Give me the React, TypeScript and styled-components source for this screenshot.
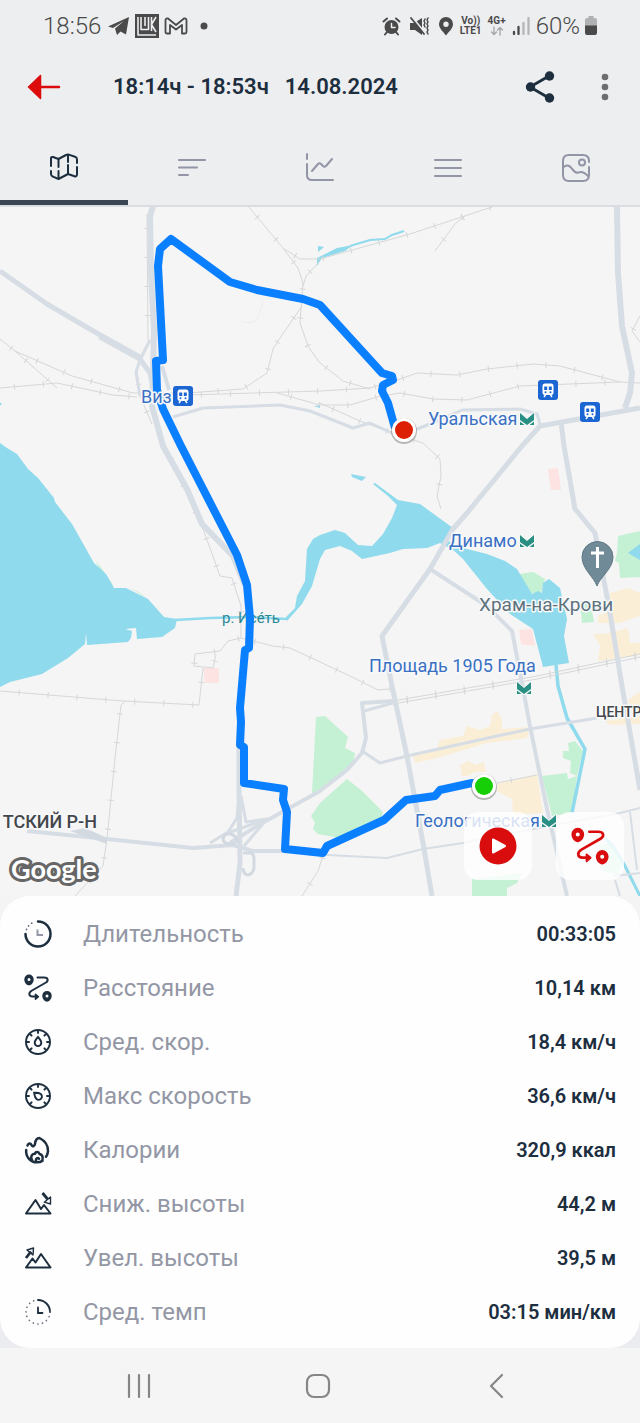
import React, { useState } from 'react';
import styled, { createGlobalStyle } from 'styled-components';

const GlobalStyle = createGlobalStyle`
  * {
    box-sizing: border-box;
  }
  body {
    margin: 0;
    background: #edeef0;
    font-family: Roboto, "Noto Sans", sans-serif;
  }
`;

const Page = styled.div`
  display: flex;
  flex-direction: column;
  min-height: 100vh;
  color: #1d2e3f;
`;

const StatusBar = styled.div`
  display: flex;
  align-items: center;
  justify-content: space-between;
  height: 52px;
  padding: 0 42px 0 43px;
  color: #4a4a4a;
`;

const StatusGroup = styled.div<{ $gap: number }>`
  display: flex;
  align-items: center;
  gap: ${({ $gap }) => $gap}px;
`;

const StatusText = styled.span`
  font-size: 24px;
  line-height: 30px;
  font-weight: 300;
`;

const Network = styled.span`
  display: flex;
  flex-direction: column;
  align-items: center;
  font-size: 10px;
  line-height: 10px;
  font-weight: 700;
`;

const Header = styled.header`
  display: flex;
  align-items: center;
  height: 70px;
  padding: 0 15px 0 24px;
`;

const IconButton = styled.button`
  display: flex;
  align-items: center;
  justify-content: center;
  width: 40px;
  height: 40px;
  padding: 0;
  border: 0;
  background: none;
  cursor: pointer;
`;

const Title = styled.h1`
  display: flex;
  flex: 1;
  gap: 16px;
  margin: 0 0 0 49px;
  font-size: 22px;
  line-height: 28px;
  font-weight: 600;
`;

const HeaderActions = styled.div`
  display: flex;
  gap: 25px;
`;

const Tabs = styled.div`
  display: flex;
  padding-top: 8px;
  border-bottom: 2px solid #d9dce0;
`;

const Tab = styled.button<{ $active: boolean }>`
  display: flex;
  flex: 1;
  align-items: center;
  justify-content: center;
  height: 75px;
  padding: 5px 0 0;
  border: 0;
  border-bottom: 5px solid ${({ $active }) => ($active ? '#3a4652' : 'transparent')};
  background: none;
  color: ${({ $active }) => ($active ? '#1d2e3f' : '#9195a6')};
  cursor: pointer;
`;

const MapArea = styled.main`
  position: relative;
  overflow: hidden;
  background: #f5f5f5;
`;

const MapCanvas = styled.svg`
  display: block;
  width: 100%;
  height: auto;
`;

const MapActions = styled.div`
  position: absolute;
  right: 16px;
  bottom: 16px;
  display: flex;
  gap: 24px;
`;

const MapButton = styled.button`
  display: flex;
  align-items: center;
  justify-content: center;
  width: 68px;
  height: 68px;
  padding: 0;
  border: 0;
  border-radius: 14px;
  background: rgba(255, 255, 255, 0.8);
  color: #d90d0d;
  cursor: pointer;
`;

const StatsArea = styled.section`
  background: linear-gradient(#f4f4f5 50%, #ebecf0 50%);
`;

const Stats = styled.dl`
  margin: 0;
  padding: 11px 24px 9px;
  border-radius: 30px;
  background: #fefefe;
`;

const StatRow = styled.div`
  display: flex;
  align-items: center;
  height: 54px;
`;

const StatName = styled.dt`
  display: flex;
  flex: 1;
  align-items: center;
  gap: 31px;
  color: #9397a5;
  font-size: 24px;
  line-height: 30px;
`;

const StatIcon = styled.svg`
  width: 28px;
  height: 28px;
  color: #1d2e3f;
`;

const StatValue = styled.dd`
  margin: 0;
  font-size: 20px;
  line-height: 30px;
  font-weight: 600;
`;

const SystemNav = styled.nav`
  display: grid;
  flex: 1;
  grid-template-columns: repeat(3, 1fr);
  place-items: center;
  min-height: 75px;
  padding: 0 54px 0 50px;
  background: #f5f5f5;
  color: #868686;
`;

const Icon = styled.svg`
  flex: none;
  fill: none;
  stroke: currentColor;
  stroke-linecap: round;
  stroke-linejoin: round;
`;

const MapLabel = styled.text<{ $size?: number; $plain?: boolean }>`
  font-size: ${({ $size }) => $size ?? 18}px;
  paint-order: stroke;
  stroke: ${({ $plain }) => ($plain ? 'none' : '#f8f9fa')};
  stroke-width: 3px;
  stroke-linejoin: round;
`;

const RouteGlyph: React.FC = () => (
  <g stroke="currentColor" fill="none" strokeLinecap="round" strokeLinejoin="round">
    <path d="M13.5 3.500H20c4 0 4.800 3 2 5L8 16.500c-4.200 2.500-3 6 .5 6H13" strokeWidth="2" />
    <path d="M11.5 20.200 14.400 22.700l-2.900 2.500Z" fill="currentColor" strokeWidth="1.500" />
    <path
      d="M5 .5a4.700 4.900 0 0 1 4.700 4.900C9.700 8.600 7 11.300 5 11.300S.3 8.600.3 5.400A4.700 4.900 0 0 1 5 .5ZM5 4a1.500 1.500 0 1 0 0 3 1.500 1.500 0 0 0 0-3Z"
      fill="currentColor"
      fillRule="evenodd"
      stroke="none"
    />
    <path
      d="M23 16.900a4.700 4.900 0 0 1 4.700 4.900c0 3.200-2.700 5.900-4.700 5.900s-4.700-2.700-4.700-5.900a4.700 4.900 0 0 1 4.700-4.900Zm0 3.500a1.500 1.500 0 1 0 0 3 1.500 1.500 0 0 0 0-3Z"
      fill="currentColor"
      fillRule="evenodd"
      stroke="none"
    />
  </g>
);

const GaugeGlyph: React.FC<{ turn: number }> = ({ turn }) => (
  <g stroke="currentColor" fill="none" strokeWidth="1.9" strokeLinecap="round">
    <circle cx="14" cy="14" r="12" />
    {[45, 90, 135, 180, 225, 270, 315].map((angle) => (
      <path key={angle} d="M14 25v-2" transform={`rotate(${angle} 14 14)`} />
    ))}
    <path
      d="M14 9c1.800 2 3.300 3.800 3.300 5.800a3.300 3.300 0 0 1-6.600 0c0-2 1.500-3.800 3.300-5.800Z"
      transform={`rotate(${turn} 14 14)`}
    />
  </g>
);

const stats = [
  {
    name: 'Длительность',
    value: '00:33:05',
    icon: (
      <g fill="none" stroke="currentColor" strokeLinecap="round">
        <path d="M14 1.500A12.500 12.500 0 1 1 1.500 14" strokeWidth="2.500" />
        <path d="M2.500 9.500A12.500 12.500 0 0 1 11 1.800" strokeWidth="1.700" strokeDasharray="0.100 4" stroke="#5d6874" />
        <path d="M13.500 9.500v5.500H19" strokeWidth="2" stroke="#9397a5" strokeLinecap="butt" />
      </g>
    ),
  },
  { name: 'Расстояние', value: '10,14 км', icon: <RouteGlyph /> },
  { name: 'Сред. скор.', value: '18,4 км/ч', icon: <GaugeGlyph turn={0} /> },
  { name: 'Макс скорость', value: '36,6 км/ч', icon: <GaugeGlyph turn={-50} /> },
  {
    name: 'Калории',
    value: '320,9 ккал',
    icon: (
      <g fill="none" stroke="currentColor" strokeWidth="2.500" strokeLinecap="round" strokeLinejoin="round">
        <path d="M3.500 9.500C4.500 7 6.500 7 7.500 9c1 2.300 3.200 1 3.500-1.200C11.300 5 12.200 2 15.500 2 20.500 4.500 24.500 9.500 24 15.500c-.2 2-.9 3.700-2 5.200" />
        <path d="M2.200 14C1.400 20.500 6.500 26.300 12.500 26.300c2.500 0 4.500-.3 6-1.600" />
        <path d="M8 24c-2-3 0-6.500 3-6.200.5-2.300 3.800-2.300 4.500.2 2.500.5 3.800 2.500 3 5.500M12 24.500c-.5-2 1.800-3.300 3-1.700" />
      </g>
    ),
  },
  {
    name: 'Сниж. высоты',
    value: '44,2 м',
    icon: (
      <g fill="none" stroke="currentColor" strokeWidth="2" strokeLinejoin="round">
        <path d="M2 23.500 11.500 10 17 19l3-4L26.500 23.500Z" />
        <path d="m18.500 3 5 6" strokeWidth="2.800" />
        <path d="m26.500 7-6.200 5.200 6.200 1.800Z" strokeWidth="1.400" />
      </g>
    ),
  },
  {
    name: 'Увел. высоты',
    value: '39,5 м',
    icon: (
      <g fill="none" stroke="currentColor" strokeWidth="2" strokeLinejoin="round">
        <path d="M2 23.500 8.500 14.500l3 4L17 10 26.500 23.500Z" />
        <path d="m2 14 5-6.500" strokeWidth="2.800" />
        <path d="m3 6 6.500-2-.5 7Z" strokeWidth="1.400" />
      </g>
    ),
  },
  {
    name: 'Сред. темп',
    value: '03:15 мин/км',
    icon: (
      <g fill="none" stroke="currentColor" strokeLinecap="round">
        <path d="M14 2a12 12 0 0 1 12 12" strokeWidth="1.900" />
        <path d="M26 14A12 12 0 1 1 14 2" strokeWidth="1.700" strokeDasharray="0.100 4.600" stroke="#6c7682" />
        <path d="M14 9.500v5.500h4.500" strokeWidth="1.800" />
      </g>
    ),
  },
];

const tabs = [
  {
    label: 'Карта',
    icon: (
      <>
        <path d="M2 13V5.500Q2 3.500 4 4l5.500 2 7.500-4 2-.6 7 2.400q2 .6 2 2.600V10" />
        <path d="M28 14v7q0 3-2.500 2.300L19 21l-9.500 5-5.500-2.300Q2 23 2 21v-3M9.500 6v8M9.500 18v8M19 2v7M19 12v9" />
      </>
    ),
  },
  { label: 'Сегменты', icon: <path d="M2 7h26M2 14.500h18M2 22h9" /> },
  { label: 'График', icon: <path d="M2 1v5M2 11v11q0 5 5 5h21M7 18l6-7q1.500-1.500 3 0l2 2q1.500 1.500 3 0l6-7" /> },
  { label: 'Список', icon: <path d="M2 7h26M2 15h26M2 23h26" /> },
  {
    label: 'Фото',
    icon: (
      <>
        <path d="M28 9V7.500Q27.500 2 22 2H8Q2 2 2 8v14q0 6 6 6h14q6 0 6-6v-8" />
        <circle cx="21" cy="9.500" r="3" />
        <path d="M2 14.500c2.500-2.500 5.500-3 8 0 2.500 3.200 4 6 7.500 5 3-1.200 5.500-.5 9.500 3.500" />
      </>
    ),
  },
];

const rails = [
  'M248 206 283 248 298 268 303 283 300 323 308 346 319 362 343 381 370 389',
  'M283 248 300 259 320 259 410 234 495 206',
  'M320 261 306 276 303 286',
  'M302 306 280 338 273 349 267 373 243 389 187 393',
  'M0 339 15 351 72 376 133 393 187 393',
  'M0 388 57 383 113 395 137 397',
  'M15 351 57 388',
  'M187 395 320 391 370 388 400 379 417 373 457 375 487 369 533 364 560 366 620 382 640 383',
  'M277 393 320 405 350 405 377 397 400 393 433 399 467 400 520 386 620 382',
  'M320 403 360 421 392 433 423 443 440 459 441 476 437 496 441 509',
  'M147 214 148 340',
  'M165 446 202 526 220 576 232 578 241 606 241 638 228 641 220 651 195 654 194 666 213 668 216 654',
  'M203 668 199 705 123 701 0 691',
  'M125 701 121 705 115 758 107 839 103 866 75 896',
  'M241 638 273 646 290 648 320 662 350 676 378 690 390 689',
  'M393 701 537 676 640 654',
  'M393 704 537 679 640 657',
  'M435 251 455 224 465 216',
  'M497 783 537 775',
  'M302 896 318 871 323 856',
  'M640 316 632 331 640 342',
  'M137 370 140 396 152 424',
];

const roads: { d: string; w: number }[] = [
  { d: 'M153 206 150 216 151 273 154 330 153 373 152 406 163 446 187 489 202 524 233 556 245 585', w: 6 },
  { d: 'M0 271 47 304 107 339 140 359 150 373 154 392', w: 5 },
  { d: 'M100 336 140 358', w: 7 },
  { d: 'M150 340 140 360 136 372 140 396', w: 3 },
  { d: 'M162 366 169 390', w: 4 },
  { d: 'M173 417 203 408 280 405 310 411 353 428 370 423 392 433 417 429 430 424 462 410 520 409 537 414 540 424', w: 3 },
  { d: 'M617 206 618 273 622 326 632 373 630 393 625 408', w: 6 },
  { d: 'M640 408 540 426 522 446 467 513 453 529 430 569 382 636 392 686 407 756 423 843 432 896', w: 5 },
  { d: 'M561 422 564 446 575 509 595 533 600 559 610 613 622 686 640 790', w: 5 },
  { d: 'M430 569 487 606 512 631 522 683 530 726 547 809 567 896', w: 4 },
  { d: 'M393 701 362 703 366 738 362 753 347 770 320 791 257 826 230 843', w: 4 },
  { d: 'M393 703 364 711', w: 3 },
  { d: 'M362 751 380 763 407 756 497 736 530 729 597 718', w: 3 },
  { d: 'M327 855 387 858 423 849 463 843 533 829 620 813 640 808', w: 2 },
  { d: 'M27 831 107 839 193 848 233 845 253 851 283 851', w: 4 },
  { d: 'M239 740 239 786 240 863 236 896', w: 5 },
  { d: 'M239 796 237 818 228 832 210 843M241 796 246 822 267 819 244 846M225 834 267 819', w: 3 },
  { d: 'M613 876 640 873M630 812 637 870M615 880 620 896', w: 2 },
];

const Metro: React.FC<{ x: number; y: number }> = ({ x, y }) => (
  <path
    transform={`translate(${x - 7} ${y - 6})`}
    d="M0 0 7 6 14 0V7L7 12 0 7ZM0 8.500 4.500 12H0ZM14 8.500 9.500 12H14Z"
    fill="#2a8f83"
    stroke="#f8f9fa"
    strokeWidth="1.500"
    paintOrder="stroke"
  />
);

const Station: React.FC<{ x: number; y: number }> = ({ x, y }) => (
  <g transform={`translate(${x - 10} ${y - 10})`}>
    <rect width="20" height="20" rx="3" fill="#1b66d2" />
    <path d="M7 3.500h6q2.500 0 2.500 2.500v6.500q0 2.500-2.500 2.500H7q-2.500 0-2.500-2.500V6q0-2.500 2.500-2.500Z" fill="#fff" />
    <path d="M6.200 6.500h3V10h-3ZM10.800 6.500h3V10h-3Z" fill="#1b66d2" />
    <circle cx="7.500" cy="12.300" r="1" fill="#1b66d2" />
    <circle cx="12.500" cy="12.300" r="1" fill="#1b66d2" />
    <path d="m7.500 15-1.500 2M12.500 15l1.500 2" stroke="#fff" strokeWidth="1.500" />
  </g>
);

const RouteEnd: React.FC<{ x: number; y: number; color: string }> = ({ x, y, color }) => (
  <g>
    <circle cx={x} cy={y + 1} r="13" fill="#6b6b6b" opacity="0.45" />
    <circle cx={x} cy={y} r="12" fill="#fff" />
    <circle cx={x} cy={y} r="9" fill={color} />
  </g>
);

const CityMap: React.FC = () => (
  <MapCanvas viewBox="0 207 640 689" role="img" aria-label="Карта маршрута">
    <g fill="#c4f0d4">
      <path d="M316 717 325 716 348 737 345 748 355 753 353 763 320 791 312 793Z" />
      <path d="M320 803 347 779 362 791 383 812 380 822 340 838 318 834 313 829 315 823 311 816Z" />
      <path d="M542 776 567 773 568 779 577 776 572 813 552 816Z" />
      <path d="M568 743 575 741 583 751 577 776 570 773 571 761 563 758 563 751 569 751Z" />
      <path d="M472 879 522 873 517 883 507 888 507 896H472Z" />
      <path d="M618 536 640 531V577L620 578 619 563 615 561 617 553Z" />
      <path d="M580 601 590 601 594 622 582 623Z" />
      <path d="M519 574 533 572 545 579 541 593 530 593Z" />
      <path d="M95 560 100 566 114 586 106 580ZM127 586 140 593 148 599Z" />
      <path d="M600 845 612 842 622 862 618 875 600 870Z" />
    </g>
    <g fill="#fbeed7">
      <path d="M610 593 628 588 640 593V616L620 623 598 623 598 616 609 611Z" />
      <path d="M593 634 605 634 628 628 630 643 640 643V655L598 661 600 645Z" />
      <path d="M413 756 437 748 440 740 463 736 467 726 480 730 490 726 492 715 497 711 502 719 502 729 530 727 527 738 487 743 437 758 415 763Z" />
      <path d="M497 784 537 774 543 813 513 815 512 799 497 791Z" />
      <path d="M460 765 468 761 476 765 484 762 486 772 475 772 468 776 462 776Z" />
      <path d="M628 700 640 692V712H632ZM605 721 640 716V724L610 725Z" />
    </g>
    <g fill="#fde4e2">
      <path d="M548 469 558 468 561 490 551 490Z" />
      <path d="M519 630 532 629 535 646 521 644Z" />
      <path d="M203 668H219V683H205Z" />
    </g>
    <g fill="#8fdaec">
      <path d="M0 443 7 448 17 454 28 469 38 478 54 498 55 502 72 524 94 563 106 574 114 588 126 588 148 599 164 617 177 619 175 628 162 637 137 639 136 628 125 629 132 631 131 638 128 642 87 645 86 633 85 644 68 658 42 674 10 682 0 687Z" />
      <path d="M286 617 295 608 297 596 305 581 307 549 313 539 320 535 335 530 345 533 358 545 372 546 383 534 392 518 397 505 388 496 373 484 375 483 398 500 420 504 453 528 445 540 467 549 487 554 505 561 517 569 532 594 538 591 542 593 543 583 549 579 560 588 567 619 564 636 569 663 543 667 533 629 510 614 487 589 463 559 452 549 440 543 427 548 403 549 390 553 362 559 352 551 340 546 325 550 320 559 312 586 302 604 287 621Z" />
      <path d="M351 474 366 477 362 481 352 477Z" />
      <path d="M317 258 337 248 353 245 345 251 322 258 317 266ZM318 246 324 247 318 252Z" />
      <path d="M628 553 640 544V560ZM0 403 2 403 0 406ZM314 406 320 405V408Z" />
    </g>
    <g fill="none" stroke="#8fdaec">
      <path d="M175 620 210 618 250 617 287 619" strokeWidth="2.500" />
      <path d="M350 246 370 240 385 239 392 235 404 231" strokeWidth="2" />
      <path d="M556 665 558 686 567 718 585 749 572 813" strokeWidth="3.500" />
      <path d="M605 838 613 846 625 866 640 896" strokeWidth="3" />
    </g>
    <g fill="none">
      {rails.map((d) => (
        <g key={d} stroke="#d6d7d9">
          <path d={d} strokeWidth="1" />
          <path d={d} strokeWidth="6" strokeDasharray="1 28" strokeDashoffset="-14" />
        </g>
      ))}
      {roads.map(({ d, w }) => (
        <path key={d} d={d} stroke="#d7dde4" strokeWidth={w} strokeLinejoin="round" />
      ))}
      <path d="M236 843q-12 3-13-4 1-6 8-5 6 2 7 9M243 853h8q3 1 3 5v10q-1 6-6 7-5-1-5-7" stroke="#d3d9e1" strokeWidth="3" />
      <path d="M241 321q10 3 16-1l6-18" stroke="#ededee" />
    </g>
    <path d="M70 831 85 828 107 838 107 844Z" fill="#d3d9e1" />

    <MapLabel x="222" y="623" $size={15} $plain fill="#2b8896">р. Исе́ть</MapLabel>
    <path
      d="M484 784 472 783 440 790 435 796 406 800 384 820 327 846 323 853 285 849 287 812 283 800 284 789 244 783 244 747 240 745 241 722 240 708 245 650 249 648 250 618 247 585 237 555 181 446 163 409 157 390 156 361 163 360 158 266 160 249 171 239 230 282 257 290 303 299 320 305 382 373 392 376 393 380 383 385 382 391 388 403 395 428"
      fill="none"
      stroke="#0a7fff"
      strokeWidth="8"
      strokeLinejoin="round"
    />
    <Station x={183} y={396} />
    <Station x={548} y={390} />
    <Station x={590} y={412} />
    <g fill="#3a70c4">
      <MapLabel x="141" y="403">Виз</MapLabel>
      <MapLabel x="428" y="425">Уральская</MapLabel>
      <MapLabel x="449" y="547">Динамо</MapLabel>
      <MapLabel x="369" y="672">Площадь 1905 Года</MapLabel>
      <MapLabel x="415" y="827">Геологическая</MapLabel>
      <MapLabel x="479" y="611" $size={19} fill="#5d727d">Храм-на-Крови</MapLabel>
      <MapLabel x="97" y="828" $size={18} fill="#43474c" fontWeight="500" textAnchor="end">ТСКИЙ Р-Н</MapLabel>
      <MapLabel x="596" y="717" $size={14} fill="#43474c" fontWeight="500">ЦЕНТР</MapLabel>
    </g>
    <Metro x={527} y={419} />
    <Metro x={527} y={541} />
    <Metro x={524} y={688} />
    <Metro x={549} y={821} />
    <path d="M597 586c-3-9-15-17-15-29a15.500 15.500 0 0 1 31 0c0 12-13 20-16 29Z" fill="#708a98" stroke="#5f7884" />
    <path d="M597.500 547v21M591 553h13" stroke="#fff" strokeWidth="3" />
    <RouteEnd x={404} y={430} color="#dd1f04" />
    <RouteEnd x={484} y={786} color="#17cf06" />
    <text
      x="11"
      y="879"
      fill="#fff"
      stroke="#666"
      strokeWidth="6"
      strokeLinejoin="round"
      paintOrder="stroke"
      fontFamily="Lato, sans-serif"
      fontSize="27"
      fontWeight="700"
    >
      Google
    </text>
  </MapCanvas>
);

export default function App() {
  const [activeTab, setActiveTab] = useState(0);

  return (
    <>
      <GlobalStyle />
      <Page>
        <StatusBar>
          <StatusGroup $gap={5}>
            <StatusText>18:56</StatusText>
            <Icon width="24" height="20" viewBox="0 0 24 20" strokeWidth="0">
              <path d="M2 10.500 23 1l-3 17.500-5.500-3L11 19l-2-6.500 9-7.500L7 12Z" fill="currentColor" />
            </Icon>
            <Icon width="24" height="24" viewBox="0 0 24 24" strokeWidth="1.600">
              <path d="M0 0h24v24H0Z" fill="currentColor" stroke="none" />
              <path d="M3 3v18h18M6 3v12.500h7.500V3M10 3v9M16.500 3v14M21 3l-4.500 7.500L21 18" stroke="#edeef1" strokeLinecap="butt" />
            </Icon>
            <Icon width="24" height="18" viewBox="0 0 24 18" strokeWidth="1.800">
              <path d="M1.500 3.500Q1.500 1 4 1.500L12 8l8-6.500q2.500-.5 2.500 2V15q0 1.500-1.500 1.500h-3V8L12 12.500 6 8v8.500H3Q1.500 16.500 1.500 15Z" />
            </Icon>
            <Icon width="20" height="24" viewBox="0 0 20 24" strokeWidth="0">
              <circle cx="11" cy="12" r="3.500" fill="currentColor" />
            </Icon>
          </StatusGroup>
          <StatusGroup $gap={4}>
            <StatusGroup $gap={6}>
              <StatusGroup $gap={9}>
                <Icon width="19" height="19" viewBox="0 0 19 19" strokeWidth="2">
                  <circle cx="9.500" cy="10" r="7" fill="currentColor" stroke="none" />
                  <path d="M1.500 4.500 5 1.500M17.500 4.500 14 1.500M5 15l-2 2.500M14 15l2 2.500" />
                  <path d="M9.500 6.500V10.500H13" stroke="#edeef1" strokeWidth="1.500" />
                </Icon>
                <Icon width="19" height="19" viewBox="0 0 19 19" strokeWidth="1.800">
                  <path d="M0 6h4l8-5v17l-7-5H0Z" fill="currentColor" stroke="none" />
                  <path d="m3 1 12 15" stroke="#edeef1" strokeWidth="2" />
                  <path d="m1 1 13 16" />
                  <path d="M15 2l-1 2 1 2-1 2 1 2M18 1l-1 2 1 2-1 2 1 2-1 2 1 2-1 2 1 2" strokeWidth="1.500" />
                </Icon>
                <Icon width="16" height="19" viewBox="0 0 16 19" strokeWidth="0">
                  <path d="M8 0a7 7 0 0 1 7 7c0 4.500-4.500 8-7 11.500C5.500 15 1 11.500 1 7a7 7 0 0 1 7-7Zm0 4.500a2.700 2.700 0 1 0 0 5.400 2.700 2.700 0 0 0 0-5.400Z" fill="currentColor" fillRule="evenodd" />
                </Icon>
              </StatusGroup>
              <Network>
                <span>Vo))</span>
                <span>LTE1</span>
              </Network>
              <Network>
                <span>4G+</span>
                <Icon width="14" height="10" viewBox="0 0 14 10" strokeWidth="1.300">
                  <path d="M4 1v7.500M1.500 6 4 8.500 6.500 6M10 9V1.500M7.500 4 10 1.500 12.500 4" stroke="#a5a5a5" />
                </Icon>
              </Network>
              <Icon width="18" height="18" viewBox="0 0 18 18" strokeWidth="2.300" strokeLinecap="butt">
                <path d="M2 17v-2M6.500 17v-7" />
                <path d="M11.500 17V6M16.500 17V1" stroke="#b5b6b8" />
              </Icon>
              <StatusText>60%</StatusText>
            </StatusGroup>
            <Icon width="14" height="20" viewBox="0 0 14 20" strokeWidth="0">
              <path d="M4.500 0h5v2h1.500q2 0 2 2v6H1V4q0-2 2-2h1.500Z" fill="#b0b1b3" />
              <path d="M1 9.500h12V17q0 2-2 2H3q-2 0-2-2Z" fill="currentColor" />
            </Icon>
          </StatusGroup>
        </StatusBar>

        <Header>
          <IconButton aria-label="Назад">
            <Icon width="34" height="26" viewBox="0 0 34 26" strokeWidth="2.500" color="#dc0c0c">
              <path d="M13 13h19" />
              <path d="M1.500 13 13.500 1.500v23Z" fill="currentColor" strokeWidth="1.500" />
            </Icon>
          </IconButton>
          <Title>
            <span>18:14ч - 18:53ч</span>
            <span>14.08.2024</span>
          </Title>
          <HeaderActions>
            <IconButton aria-label="Поделиться">
              <Icon width="30" height="32" viewBox="0 0 30 32" strokeWidth="2.800" color="#1d2e3f">
                <path d="M24 5 5 16l19 11" />
                <g fill="currentColor" stroke="none">
                  <circle cx="24.500" cy="5" r="4.700" />
                  <circle cx="5.500" cy="16" r="4.700" />
                  <circle cx="24.500" cy="27" r="4.700" />
                </g>
              </Icon>
            </IconButton>
            <IconButton aria-label="Меню">
              <Icon width="8" height="28" viewBox="0 0 8 28" strokeWidth="0">
                <g fill="#6d6d6d">
                  <circle cx="4" cy="4" r="3.300" />
                  <circle cx="4" cy="14" r="3.300" />
                  <circle cx="4" cy="24" r="3.300" />
                </g>
              </Icon>
            </IconButton>
          </HeaderActions>
        </Header>

        <Tabs role="tablist">
          {tabs.map((tab, index) => (
            <Tab
              key={tab.label}
              role="tab"
              aria-label={tab.label}
              aria-selected={index === activeTab}
              $active={index === activeTab}
              onClick={() => setActiveTab(index)}
            >
              <Icon width="30" height="30" viewBox="0 0 30 30" strokeWidth="2">
                {tab.icon}
              </Icon>
            </Tab>
          ))}
        </Tabs>

        <MapArea>
          <CityMap />
          <MapActions>
            <MapButton aria-label="Воспроизвести">
              <Icon width="38" height="38" viewBox="0 0 38 38" strokeWidth="2">
                <circle cx="19" cy="19" r="18.500" fill="currentColor" stroke="none" />
                <path d="M14 12.500v13L26 19Z" fill="#fff" stroke="#fff" />
              </Icon>
            </MapButton>
            <MapButton aria-label="Маршрут">
              <svg width="38" height="38" viewBox="0 0 28 28">
                <RouteGlyph />
              </svg>
            </MapButton>
          </MapActions>
        </MapArea>

        <StatsArea>
          <Stats>
            {stats.map((stat) => (
              <StatRow key={stat.name}>
                <StatName>
                  <StatIcon viewBox="0 0 28 28">{stat.icon}</StatIcon>
                  {stat.name}
                </StatName>
                <StatValue>{stat.value}</StatValue>
              </StatRow>
            ))}
          </Stats>
        </StatsArea>

        <SystemNav>
          <IconButton aria-label="Недавние">
            <Icon width="26" height="26" viewBox="0 0 26 26" strokeWidth="2.200" color="#868686">
              <path d="M3 2v22M13 2v22M23 2v22" />
            </Icon>
          </IconButton>
          <IconButton aria-label="Домой">
            <Icon width="26" height="26" viewBox="0 0 26 26" strokeWidth="2.200" color="#868686">
              <rect x="2" y="2" width="22" height="22" rx="7" />
            </Icon>
          </IconButton>
          <IconButton aria-label="Назад в системе">
            <Icon width="26" height="26" viewBox="0 0 26 26" strokeWidth="2.200" color="#868686">
              <path d="M18 2 7 13l11 11" />
            </Icon>
          </IconButton>
        </SystemNav>
      </Page>
    </>
  );
}
